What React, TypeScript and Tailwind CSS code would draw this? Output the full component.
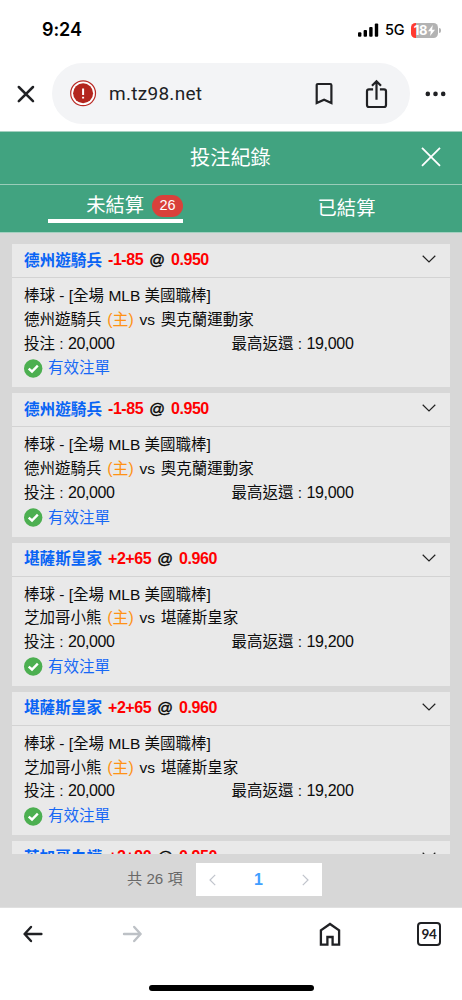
interface Bet {
  pick: string;
  line: string;
  odds: string;
  home: string;
  away: string;
  stake: string;
  payout: string;
}

const bets: Bet[] = [
  { pick: "德州遊騎兵", line: "-1-85", odds: "0.950", home: "德州遊騎兵", away: "奧克蘭運動家", stake: "20,000", payout: "19,000" },
  { pick: "德州遊騎兵", line: "-1-85", odds: "0.950", home: "德州遊騎兵", away: "奧克蘭運動家", stake: "20,000", payout: "19,000" },
  { pick: "堪薩斯皇家", line: "+2+65", odds: "0.960", home: "芝加哥小熊", away: "堪薩斯皇家", stake: "20,000", payout: "19,200" },
  { pick: "堪薩斯皇家", line: "+2+65", odds: "0.960", home: "芝加哥小熊", away: "堪薩斯皇家", stake: "20,000", payout: "19,200" },
  { pick: "芝加哥白襪", line: "+2+90", odds: "0.950", home: "芝加哥白襪", away: "堪薩斯皇家", stake: "20,000", payout: "19,000" },
];

const StatusBar = () => (
  <div className="flex h-[63px] shrink-0 items-start justify-between pt-[19px] pr-[21px] pl-[42px]">
    <span className="font-['Inter','Noto_Sans_CJK_TC',sans-serif] text-[18px] leading-[22px] font-semibold tracking-[-0.1px] text-black">9:24</span>
    <div className="flex h-[22px] items-center">
      <svg className="h-[14px] w-[21px]" viewBox="0 0 21 14" fill="#000">
        <rect x="0" y="9.2" width="3.4" height="4.6" rx="1" />
        <rect x="5.6" y="7" width="3.4" height="6.8" rx="1" />
        <rect x="11.2" y="4" width="3.4" height="9.8" rx="1" />
        <rect x="16.8" y="0.6" width="3.4" height="13.2" rx="1" />
      </svg>
      <span className="ml-[6px] w-[20px] font-['Inter',sans-serif] text-[14.5px] leading-[22px] font-medium tracking-[-0.3px] text-black">5G</span>
      <div className="ml-[6px] flex h-[15px] w-[27px] shrink-0 items-center justify-center rounded-[4.5px] bg-[linear-gradient(90deg,#ff3b30_5px,#b3b3b3_5px)] text-white">
        <span className="font-['Inter',sans-serif] text-[13px] leading-[15px] font-bold tracking-[-0.4px]">18</span>
        <svg className="ml-px h-[11px] w-[7px]" viewBox="0 0 7 11" fill="currentColor">
          <path d="M4.8 0 0 6.2h2.8L2.1 11 7 4.7H4.1z" />
        </svg>
      </div>
      <div className="ml-px h-[5px] w-[2px] rounded-r-full bg-[#b3b3b3]" />
    </div>
  </div>
);

const AddressBar = () => (
  <div className="flex h-[68px] shrink-0 items-start text-[#202124]">
    <svg className="mt-[22px] ml-[17px] h-[18px] w-[18px]" viewBox="0 0 18 18" fill="none" stroke="currentColor" strokeWidth="2.5" strokeLinecap="round">
      <path d="M1.8 2 16 16.2M16 2 1.8 16.2" />
    </svg>
    <div className="ml-[17px] flex h-[61px] w-[358px] items-center rounded-full bg-[#f3f4f6] pl-[18px]">
      <svg className="h-[27px] w-[27px]" viewBox="0 0 27 27">
        <circle cx="13.1" cy="13.3" r="12.4" fill="#fff" stroke="#b92a25" strokeWidth="1.2" />
        <circle cx="13.1" cy="13.3" r="10" fill="#b3261e" />
        <path d="M13.1 8.5v6.4M13.1 16.7v1.9" stroke="#fff" strokeWidth="2" />
      </svg>
      <span className="ml-[12px] w-[206px] pt-[2px] font-['Roboto','Noto_Sans_CJK_TC',sans-serif] text-[19px] tracking-[0.28px]">m.tz98.net</span>
      <svg className="h-[24px] w-[18px]" viewBox="0 0 18 24" fill="none" stroke="currentColor" strokeWidth="2.2">
        <path d="M1.7 21.1V3.2Q1.7 2 2.9 2H15.2Q16.4 2 16.4 3.2V21.1L9.1 17.8z" />
      </svg>
      <svg className="ml-[32px] h-[30px] w-[23px]" viewBox="0 0 23 30" fill="none" stroke="currentColor" strokeWidth="2.2">
        <path d="M8.1 10.3H4Q2 10.3 2 12.3V26Q2 28 4 28H19Q21 28 21 26V12.3Q21 10.3 19 10.3H14.9M11.5 20.8V2.4M7 6.7 11.5 2.2 16 6.7" />
      </svg>
    </div>
    <svg className="mt-[28px] ml-[15px] h-[6px] w-[21px]" viewBox="0 0 21 6" fill="currentColor">
      <circle cx="2.8" cy="2.9" r="2.3" />
      <circle cx="10.5" cy="2.9" r="2.3" />
      <circle cx="18.2" cy="2.9" r="2.3" />
    </svg>
  </div>
);

const RecordHeader = () => (
  <header className="h-[102px] shrink-0 bg-[#41a380] text-white">
    <div className="flex h-[54px] items-center border-t border-b border-t-[#a4d0c0] border-b-[#9accb9]">
      <h1 className="ml-[131px] flex-1 pl-[59px] text-[20.2px] leading-[30px] font-normal">投注紀錄</h1>
      <svg className="mr-[21px] mb-[2px] h-[20px] w-[20px]" viewBox="0 0 20 20" fill="none" stroke="currentColor" strokeWidth="1.8">
        <path d="M1 0.8 19 18.8M19 0.8 1 18.8" />
      </svg>
    </div>
    <div className="flex h-[48px] border-b border-[#a4d0c0] text-[19.3px]">
      <div className="flex w-1/2 justify-center">
        <div className="flex h-[38px] w-[135px] items-center justify-end border-b-[4px] border-white pt-[7px]">
          <span className="leading-[30px] whitespace-nowrap">未結算</span>
          <span className="ml-[8px] flex h-[22px] w-[31px] items-center justify-center rounded-full bg-[#d9413b] text-[14.5px]">26</span>
        </div>
      </div>
      <div className="flex w-1/2 items-center justify-center leading-[30px]">已結算</div>
    </div>
  </header>
);

const BetCard = ({ bet }: { bet: Bet }) => (
  <article className="mb-[6px] h-[143.3px] bg-[#e9e9e9] text-[15.5px] leading-[23.8px] text-[#0c0c0c]">
    <div className="flex h-[34px] items-center justify-between border-b border-[#d3d3d3] pr-[14px] pl-[12px] font-bold">
      <p className="flex items-center">
        <span className="text-[15.6px] text-[#0864f5]">{bet.pick}</span>
        <span className="ml-[6px] pb-px text-[16px] tracking-[-0.43px] text-[#ff0000]">{bet.line}</span>
        <span className="mx-[6px] pb-px font-normal [-webkit-text-stroke:0.4px_black]">@</span>
        <span className="pb-px text-[16px] tracking-[-0.43px] text-[#ff0000]">{bet.odds}</span>
      </p>
      <svg className="-mt-[3px] h-[8px] w-[14px]" viewBox="0 0 14 8" fill="none" stroke="#222" strokeWidth="1.2">
        <path d="M0.7 0.8 7 7 13.3 0.8" />
      </svg>
    </div>
    <div className="pt-[6px] pl-[12px]">
      <p>棒球 - [全場 MLB 美國職棒]</p>
      <p>
        {bet.home} <span className="ml-[1.5px] text-[15.8px] text-[#ff9214]">(主)</span> <span className="mx-[1.5px]">vs</span> {bet.away}
      </p>
      <div className="flex">
        <span className="w-[207.5px]">
          投注 : <span className="text-[16px] tracking-[-0.4px]">{bet.stake}</span>
        </span>
        <span>
          最高返還 : <span className="text-[16px] tracking-[-0.3px]">{bet.payout}</span>
        </span>
      </div>
      <div className="mt-[1px] flex items-center">
        <svg className="h-[19px] w-[19px]" viewBox="0 0 19 19">
          <circle cx="9.2" cy="9.5" r="9.2" fill="#4caf50" />
          <path d="M4.7 9.6 8 12.5 13.8 6.7" fill="none" stroke="#fff" strokeWidth="2.4" />
        </svg>
        <span className="ml-[5px] text-[#1768f5]">有效注單</span>
      </div>
    </div>
  </article>
);

const Pager = () => (
  <div className="flex h-[54px] shrink-0 items-start border-b border-[#e0e0e0] bg-[#d7d7d7] pt-[9px] pl-[127px]">
    <span className="w-[69px] text-[15.2px] leading-[32px] text-[#696969]">共 26 項</span>
    <div className="flex h-[33px] w-[126px] items-center justify-between bg-white px-[13px]">
      <svg className="h-[12px] w-[7px]" viewBox="0 0 7 12" fill="none" stroke="#c0c4cc" strokeWidth="1.2">
        <path d="M6.2 0.8 1 6 6.2 11.2" />
      </svg>
      <span className="pr-px text-[16px] font-bold text-[#409eff]">1</span>
      <svg className="h-[12px] w-[7px]" viewBox="0 0 7 12" fill="none" stroke="#c0c4cc" strokeWidth="1.2">
        <path d="M0.8 0.8 6 6 0.8 11.2" />
      </svg>
    </div>
  </div>
);

const BottomBar = () => (
  <nav className="flex flex-1 flex-col items-center bg-white">
    <div className="flex h-[52px] w-full items-center pl-[22px] text-[#202124]">
      <svg className="h-[18px] w-[22px]" viewBox="0 0 22 18" fill="none" stroke="currentColor" strokeWidth="2.4" strokeLinecap="round" strokeLinejoin="round">
        <path d="M19.4 9H2.6M9 2 2.6 9 9 16" />
      </svg>
      <svg className="ml-[78px] h-[18px] w-[22px]" viewBox="0 0 22 18" fill="none" stroke="#bdc1c6" strokeWidth="2.4" strokeLinecap="round" strokeLinejoin="round">
        <path d="M2 9H18.6M12.2 2 18.6 9 12.2 16" />
      </svg>
      <svg className="ml-[174px] h-[26px] w-[24px]" viewBox="0 0 24 26" fill="none" stroke="currentColor" strokeWidth="2.3">
        <path d="M2.9 23.6V9.4L12 3 21.1 9.4V23.6H14.6V16H9.4V23.6z" />
      </svg>
      <div className="ml-[75px] flex h-[24px] w-[24px] shrink-0 items-center justify-center rounded-[4px] border-[2px] border-[#202124] font-['Lato',sans-serif] text-[13.5px] font-bold tracking-[-0.3px]">94</div>
    </div>
    <div className="mt-[25px] h-[6px] w-[165px] rounded-full bg-black" />
  </nav>
);

export default function App() {
  return (
    <div className="flex h-[1000px] w-[462px] flex-col overflow-hidden bg-white font-['Liberation_Sans','Noto_Sans_CJK_TC',sans-serif]">
      <StatusBar />
      <AddressBar />
      <RecordHeader />
      <main className="h-[621px] shrink-0 overflow-hidden bg-[#d7d7d7] px-[12px] pt-[11px]">
        {bets.map((bet, index) => (
          <BetCard key={index} bet={bet} />
        ))}
      </main>
      <Pager />
      <BottomBar />
    </div>
  );
}
